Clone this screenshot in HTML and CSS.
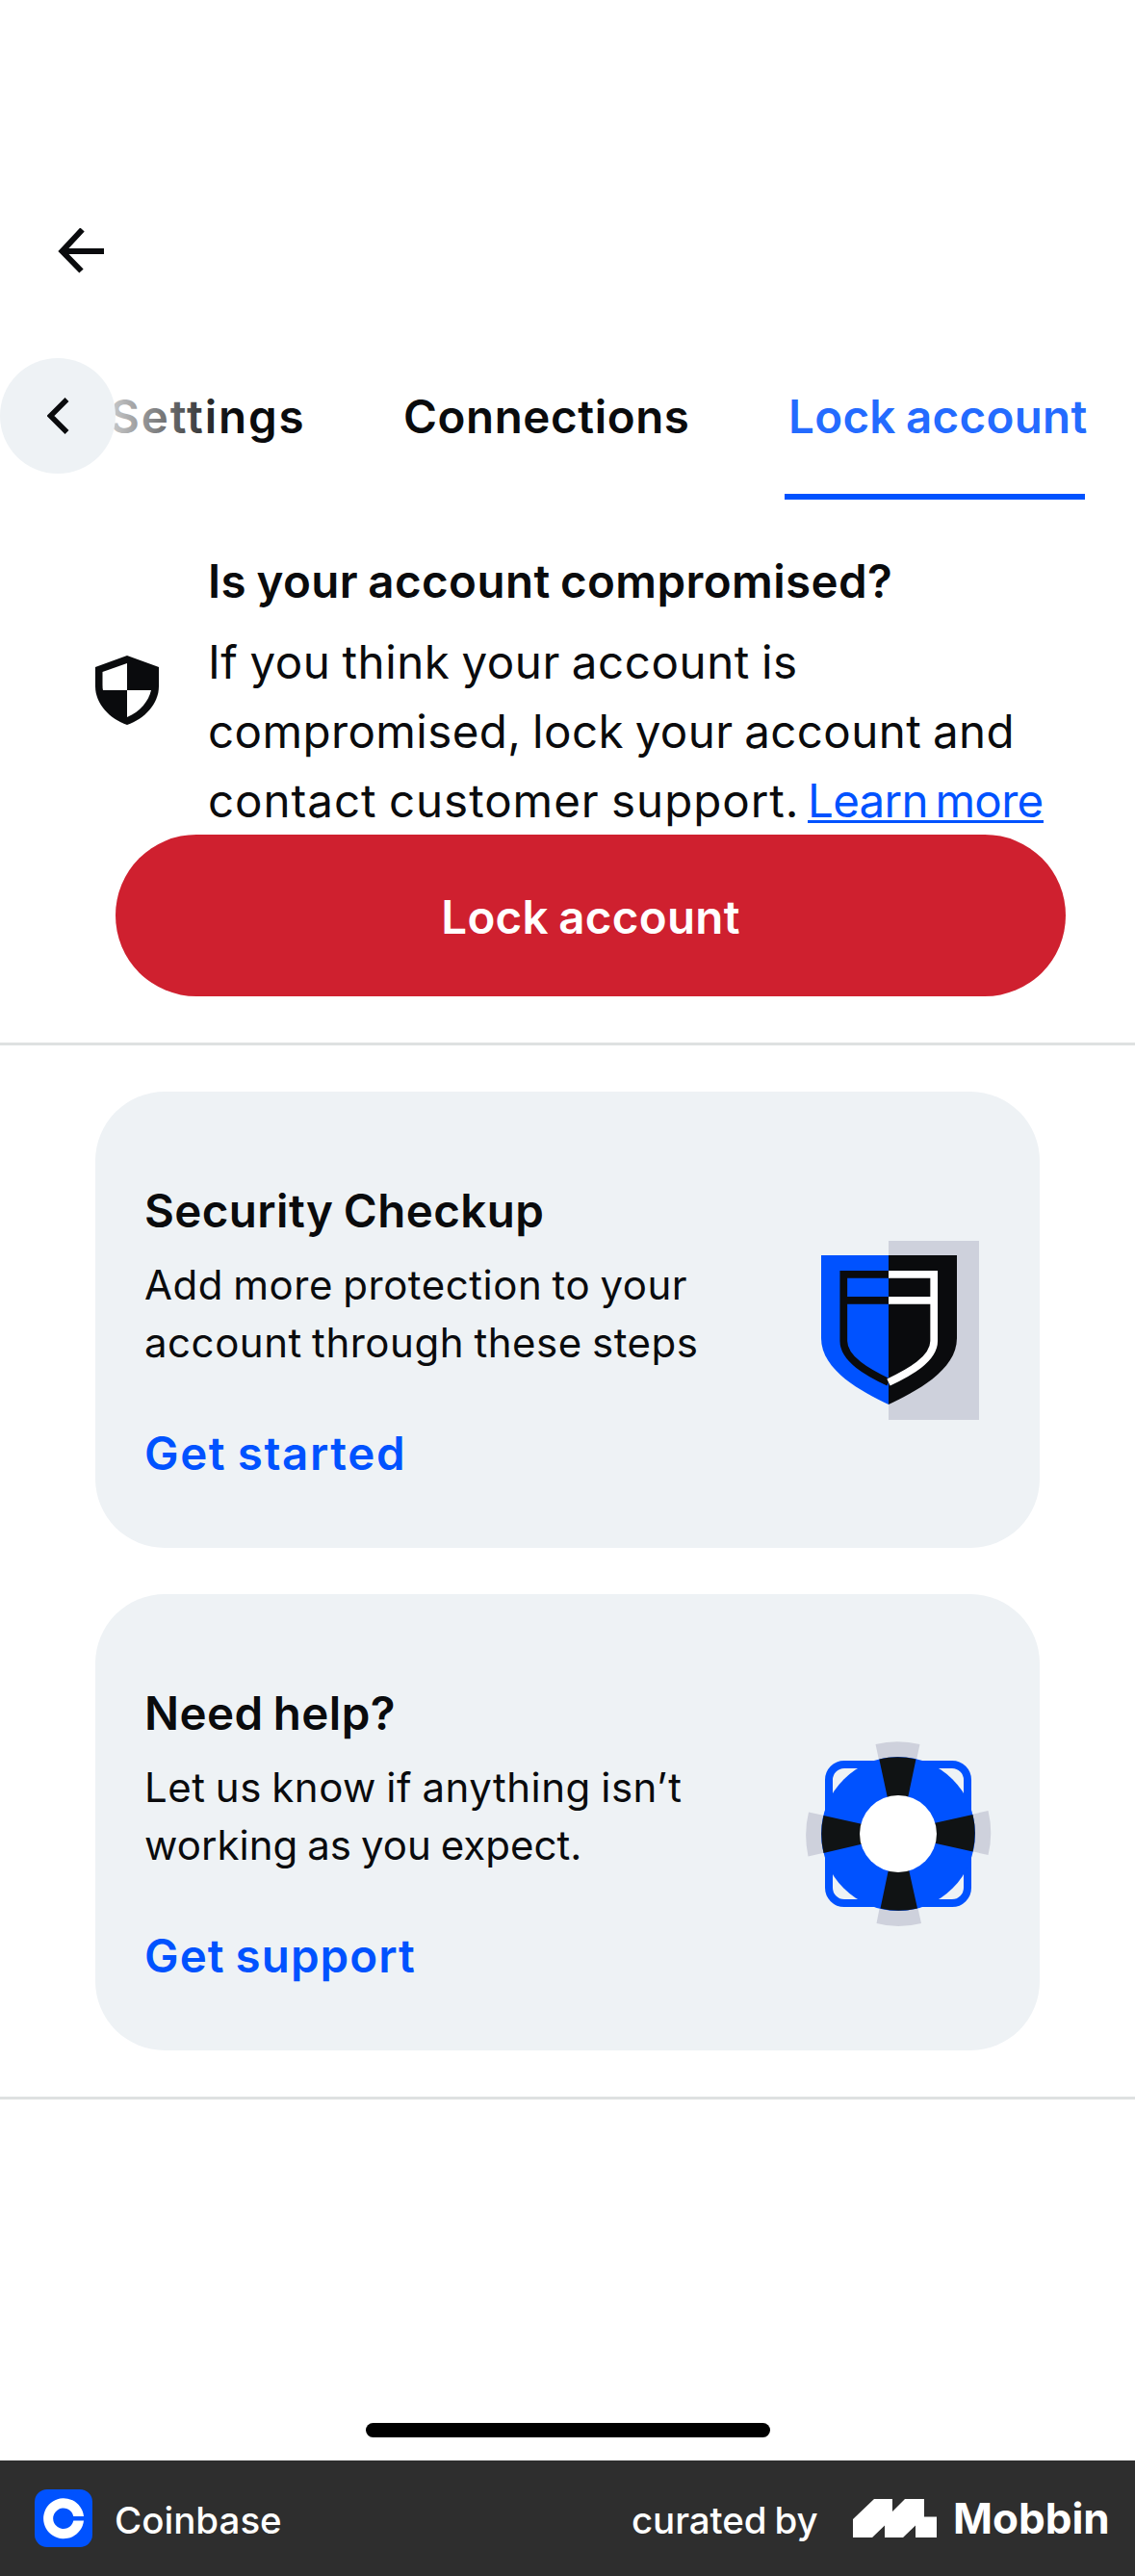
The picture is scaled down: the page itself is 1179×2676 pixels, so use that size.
FILE: index.html
```html
<!DOCTYPE html>
<html lang="en">
<head>
<meta charset="utf-8">
<title>Lock account</title>
<link rel="stylesheet" href="styles.css">
</head>
<body>
<div class="screen">
  <header class="topbar">
    <svg class="back" width="50" height="48" viewBox="0 0 50 48" aria-label="Back"><path d="M25.500 1.500 4.500 24l20 20.500M5 24h43" fill="none" stroke="#0a0b0d" stroke-width="6"/></svg>
  </header>

  <nav class="tabs">
    <a class="tab tab-settings">Settings</a>
    <a class="tab tab-connections">Connections</a>
    <a class="tab tab-lock">Lock account</a>
    <div class="fade"></div>
    <button class="scroll-left" aria-label="Scroll left">
      <svg width="24" height="38" viewBox="0 0 24 38"><path d="M20.500 2 3.500 19l17 17" fill="none" stroke="#0a0b0d" stroke-width="5.500"/></svg>
    </button>
  </nav>

  <section class="alert">
    <div class="alert-row">
      <svg class="alert-icon" width="66" height="72" viewBox="0 0 66 72"><path d="M33 0 66 12V32C66 50 51 66 33 72 15 66 0 50 0 32V12Z" fill="#0a0b0d"/><path d="M33 8V36H8Q7.500 34 7.500 31V17Z" fill="#fff"/><path d="M33 36H58C55.500 47 47 58 33 64Z" fill="#fff"/></svg>
      <div class="alert-copy">
        <h2 class="title alert-title">Is your account compromised?</h2>
        <p class="alert-text">
          <span class="line">If you think your account is</span>
          <span class="line line-snug">compromised, lock your account and</span>
          <span class="line line-last"><span class="line-wide">contact customer support.</span><a class="learn">Learn more</a></span>
        </p>
      </div>
    </div>
    <button class="lock-button">Lock account</button>
  </section>

  <section class="cards">
    <article class="card">
      <div class="card-copy">
        <h3 class="title">Security Checkup</h3>
        <p class="card-text"><span class="line">Add more protection to your</span><span class="line">account through these steps</span></p>
        <a class="card-link link-start">Get started</a>
      </div>
      <svg class="card-art" width="200" height="200" viewBox="30 30 200 200">
        <path d="M123 39H217V225H123Z" fill="#ced1dc"/>
        <path d="M53 54H123V209C96 196 53 174 53 140Z" fill="#0052ff"/>
        <path d="M123 54H194V140C194 174 150 196 123 209Z" fill="#0a0b0d"/>
        <path d="M123 73.800H76.300V143C76.300 162 102 176 123 186M76.500 100.800H123" fill="none" stroke="#0a0b0d" stroke-width="7.700"/>
        <path d="M123 73.800H170.200V143C170.200 162 144 176 123 186M123 100.800H170" fill="none" stroke="#fff" stroke-width="7.700"/>
      </svg>
    </article>

    <article class="card">
      <div class="card-copy">
        <h3 class="title">Need help?</h3>
        <p class="card-text"><span class="line">Let us know if anything isn’t</span><span class="line line-tight">working as you expect.</span></p>
        <a class="card-link link-support">Get support</a>
      </div>
      <svg class="card-art" width="200" height="200" viewBox="30 22 200 200">
        <path fill="#ced1dc" d="M109.500 32Q132 26.500 155.500 32L143 90H122ZM110.500 218Q133 224 157 218L144 160H122ZM40 102.500Q34.500 125 39.500 148.500L98 135V115ZM226.500 101Q232 124 226.500 147L168 134V114Z"/>
        <rect x="61" y="53" width="144" height="144" rx="16" fill="#eef2f5" stroke="#0052ff" stroke-width="8"/>
        <circle cx="133" cy="125" r="80" fill="#0052ff"/>
        <path fill="#101314" d="M113.300 47.500Q132 43 151.500 47.500L143 88H122ZM114.500 202.500Q133 207 153 202.500L144 162H123ZM55.500 106Q51 125 55.500 145L96 135.500V115ZM210.500 105Q215 124 210.500 143.500L170 134.500V114Z"/>
        <circle cx="133" cy="125" r="40" fill="#fff"/>
      </svg>
    </article>
  </section>

  <div class="home-indicator"></div>

  <footer class="footer">
    <svg class="app-icon" width="60" height="60" viewBox="0 0 60 60"><rect width="60" height="60" rx="13" fill="#0052ff"/><path d="M51 28A21 21 0 1 0 51 32.500H40.300A10.700 10.700 0 1 1 40.300 28Z" fill="#fff"/></svg>
    <span class="app-name">Coinbase</span>
    <span class="curated">curated by</span>
    <svg class="mobbin-mark" width="87" height="40" viewBox="0 0 87 40"><path d="M0 21 22 0H41V13L54 0H74V18.500H87V40H65V27.500L52 40H33V27.500L20 40H0Z" fill="#fff"/></svg>
    <span class="mobbin">Mobbin</span>
  </footer>
</div>
</body>
</html>
```
FILE: styles.css
```css
* { box-sizing: border-box; margin: 0; padding: 0; }

body {
  background: #fff;
  color: #0a0b0d;
  font-family: Inter, "Liberation Sans", sans-serif;
  font-size: 47.5px;
  word-spacing: -2px;
}

button { border: 0; font: inherit; }

.screen {
  display: flex;
  flex-direction: column;
  width: 1179px;
  height: 2676px;
  overflow: hidden;
}

.topbar { height: 372px; padding: 237px 0 0 60px; }
.back { display: block; }

/* Tabs */
.tabs {
  position: relative;
  display: grid;
  grid-template-columns: 419px 396px 312px;
  height: 147px;
  padding-top: 25px;
  line-height: 72px;
  font-weight: 600;
}
.tab { height: 122px; white-space: nowrap; }
.tab-settings { padding-left: 114px; letter-spacing: 1.9px; }
.tab-connections { letter-spacing: 0.58px; }
.tab-lock {
  padding-left: 4px;
  border-bottom: 6px solid #0052ff;
  color: #246bff;
  letter-spacing: 0.3px;
}
.fade {
  position: absolute;
  left: 0;
  top: 0;
  width: 240px;
  height: 120px;
  background: linear-gradient(to right, #fff 80px, rgba(255, 255, 255, 0) 240px);
}
.scroll-left {
  position: absolute;
  left: 0;
  top: 0;
  display: flex;
  align-items: center;
  justify-content: center;
  width: 120px;
  height: 120px;
  padding-left: 2px;
  border-radius: 50%;
  background: #eef2f5;
}

/* Compromised account notice */
.alert {
  padding: 55px 72px 48px 99px;
  border-bottom: 3px solid #dee1e1;
}
.alert-row { display: flex; gap: 51px; }
.alert-icon { flex: none; margin-top: 107px; }
.title {
  font-size: 47.5px;
  font-weight: 600;
  line-height: 60px;
  letter-spacing: 0.4px;
  white-space: nowrap;
}
.alert-text {
  margin-top: 18px;
  line-height: 72px;
  letter-spacing: 0.57px;
}
.line { display: block; white-space: nowrap; }
.line-snug { letter-spacing: 0.4px; }
.line-last { display: flex; height: 72px; }
.line-wide { width: 623px; letter-spacing: 0.97px; }
.learn {
  height: 59px;
  border-bottom: 3px solid #0052ff;
  color: #0052ff;
  letter-spacing: -0.71px;
  word-spacing: -5px;
}
.lock-button {
  display: block;
  width: 987px;
  height: 168px;
  margin: -1px 0 0 21px;
  padding-top: 2px;
  border-radius: 84px;
  background: #cf202f;
  color: #fff;
  font-weight: 600;
  letter-spacing: 0.3px;
  word-spacing: -2px;
}

/* Cards */
.cards {
  display: grid;
  gap: 48px;
  padding: 48px 99px;
  border-bottom: 3px solid #dee1e1;
}
.card {
  display: flex;
  justify-content: space-between;
  height: 474px;
  padding: 94px 50px 0 51px;
  border-radius: 72px;
  background: #eef2f5;
}
.card-text {
  margin-top: 17px;
  font-size: 42px;
  line-height: 60px;
  letter-spacing: 0.52px;
}
.line-tight { letter-spacing: 0.04px; }
.card-link {
  display: block;
  margin-top: 55px;
  color: #0052ff;
  font-weight: 600;
  line-height: 60px;
}
.link-start { letter-spacing: 1.6px; }
.link-support { letter-spacing: 1.05px; }
.card-art { flex: none; margin-top: 52px; }

.home-indicator {
  width: 420px;
  height: 15px;
  margin: 336px 0 24px 380px;
  border-radius: 8px;
  background: #000;
}

/* Attribution bar */
.footer {
  display: flex;
  align-items: center;
  height: 120px;
  padding-left: 36px;
  background: #2e2e2e;
  color: #fff;
  font-size: 38.5px;
  font-weight: 500;
  line-height: 60px;
}
.app-icon { flex: none; }
.app-name { width: 537px; padding: 3px 0 0 23px; }
.curated { width: 230px; padding: 3px 0 0 23px; letter-spacing: -0.1px; }
.mobbin-mark { flex: none; margin-left: 23px; }
.mobbin { margin-left: 17px; font-size: 44px; font-weight: 700; }
```
